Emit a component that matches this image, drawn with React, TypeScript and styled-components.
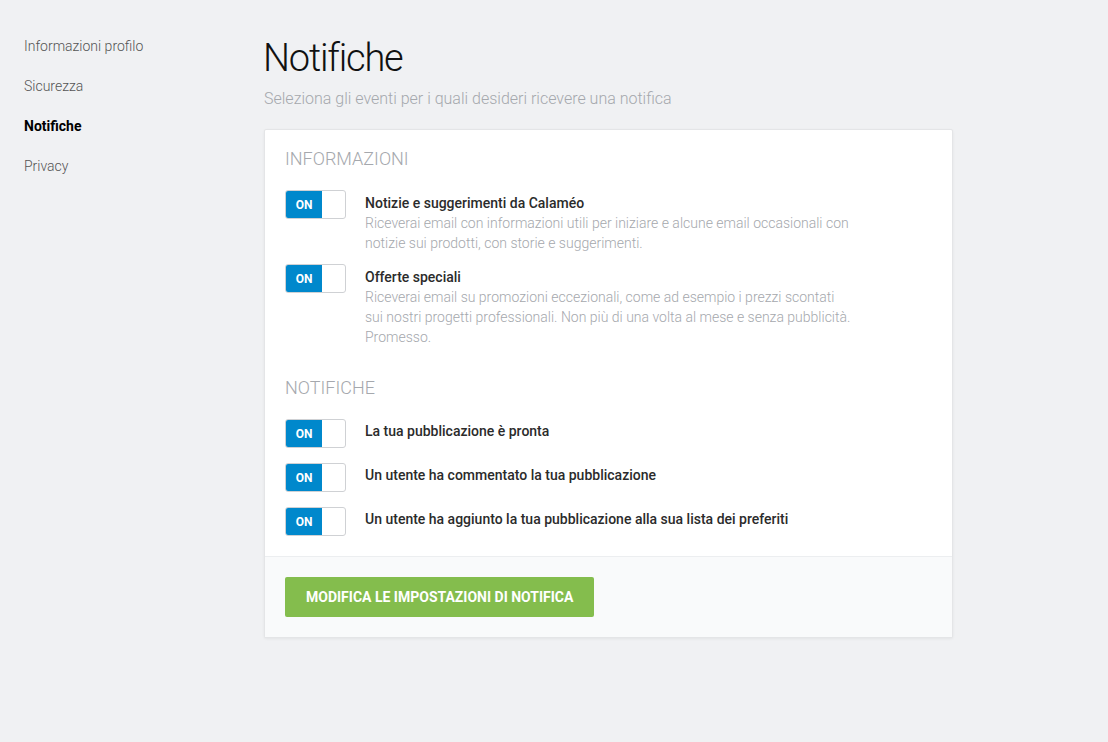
import React from "react";
import styled, { createGlobalStyle } from "styled-components";

const Global = createGlobalStyle`
  html, body { margin: 0; padding: 0; background: #f0f1f3; }
  body { font-family: Roboto, "Liberation Sans", sans-serif; color: #333; }
  * { box-sizing: border-box; }
`;

const Page = styled.div`
  display: flex;
  min-height: 742px;
  padding-top: 36px;
`;

const Sidebar = styled.nav`
  width: 264px;
  padding-left: 24px;
  display: flex;
  flex-direction: column;
`;

const NavItem = styled.a<{ $active?: boolean }>`
  display: block;
  height: 40px;
  line-height: 20px;
  font-size: 14px;
  font-weight: ${(p) => (p.$active ? 700 : 300)};
  color: ${(p) => (p.$active ? "#000" : "#555")};
  text-decoration: none;
`;

const Main = styled.main`
  width: 689px;
  display: flex;
  flex-direction: column;
`;

const Title = styled.h1`
  margin: -2px 0 0 -1px;
  font-size: 38px;
  line-height: 48px;
  font-weight: 300;
  letter-spacing: -1.2px;
  color: #111;
`;

const Subtitle = styled.p`
  margin: 7px 0 0;
  font-size: 16px;
  line-height: 20px;
  font-weight: 300;
  color: #a5a8ad;
`;

const Card = styled.section`
  margin-top: 20px;
  background: #fff;
  border: 1px solid #e4e5e7;
  border-radius: 2px;
  box-shadow: 0 1px 3px rgba(0, 0, 0, 0.06);
`;

const Body = styled.div`
  padding: 19px 20px 20px;
  display: flex;
  flex-direction: column;
`;

const SectionHeading = styled.h2<{ $first?: boolean }>`
  margin: ${(p) => (p.$first ? "0" : "31px")} 0 0;
  font-size: 18px;
  line-height: 20px;
  font-weight: 300;
  color: #a5a8ad;
  text-transform: uppercase;
`;

const List = styled.div<{ $gap: number }>`
  margin-top: 21px;
  display: flex;
  flex-direction: column;
  gap: ${(p) => p.$gap}px;
`;

const Row = styled.div`
  display: flex;
  align-items: flex-start;
  gap: 19px;
`;

const Toggle = styled.div`
  flex: none;
  width: 61px;
  height: 29px;
  border: 1px solid #cfd1d4;
  border-radius: 3px;
  background: #fff;
  display: flex;
  overflow: hidden;
`;

const ToggleOn = styled.span`
  width: 36px;
  height: 100%;
  background: #0088cc;
  color: #fff;
  font-size: 12px;
  font-weight: 700;
  display: flex;
  align-items: center;
  justify-content: center;
`;

const Text = styled.div<{ $pad: number }>`
  padding-top: ${(p) => p.$pad}px;
  max-width: 486px;
`;

const ItemTitle = styled.div`
  font-size: 14px;
  line-height: 20px;
  font-weight: 500;
  color: #2b2b2b;
`;

const ItemDesc = styled.div`
  font-size: 14px;
  line-height: 20px;
  font-weight: 300;
  color: #a5a8ad;
`;

const Footer = styled.div`
  border-top: 1px solid #eceef0;
  background: #f9fafb;
  padding: 20px;
`;

const Button = styled.button`
  height: 40px;
  padding: 0 21px;
  border: none;
  border-radius: 2px;
  background: #84bd4d;
  color: #fff;
  font-family: Roboto, "Liberation Sans", sans-serif;
  font-size: 14px;
  font-weight: 700;
  text-transform: uppercase;
  cursor: pointer;
`;

const Switch = () => (
  <Toggle>
    <ToggleOn>ON</ToggleOn>
  </Toggle>
);

export default function App() {
  return (
    <>
      <Global />
      <Page>
        <Sidebar>
          <NavItem href="#">Informazioni profilo</NavItem>
          <NavItem href="#">Sicurezza</NavItem>
          <NavItem href="#" $active>
            Notifiche
          </NavItem>
          <NavItem href="#">Privacy</NavItem>
        </Sidebar>
        <Main>
          <Title>Notifiche</Title>
          <Subtitle>Seleziona gli eventi per i quali desideri ricevere una notifica</Subtitle>
          <Card>
            <Body>
              <SectionHeading $first>Informazioni</SectionHeading>
              <List $gap={11}>
                <Row>
                  <Switch />
                  <Text $pad={3}>
                    <ItemTitle>Notizie e suggerimenti da Calaméo</ItemTitle>
                    <ItemDesc>
                      Riceverai email con informazioni utili per iniziare e alcune email occasionali con notizie
                      sui prodotti, con storie e suggerimenti.
                    </ItemDesc>
                  </Text>
                </Row>
                <Row>
                  <Switch />
                  <Text $pad={3}>
                    <ItemTitle>Offerte speciali</ItemTitle>
                    <ItemDesc>
                      Riceverai email su promozioni eccezionali, come ad esempio i prezzi scontati sui nostri
                      progetti professionali. Non più di una volta al mese e senza pubblicità. Promesso.
                    </ItemDesc>
                  </Text>
                </Row>
              </List>
              <SectionHeading>Notifiche</SectionHeading>
              <List $gap={15}>
                <Row>
                  <Switch />
                  <Text $pad={2}>
                    <ItemTitle>La tua pubblicazione è pronta</ItemTitle>
                  </Text>
                </Row>
                <Row>
                  <Switch />
                  <Text $pad={2}>
                    <ItemTitle>Un utente ha commentato la tua pubblicazione</ItemTitle>
                  </Text>
                </Row>
                <Row>
                  <Switch />
                  <Text $pad={2}>
                    <ItemTitle>Un utente ha aggiunto la tua pubblicazione alla sua lista dei preferiti</ItemTitle>
                  </Text>
                </Row>
              </List>
            </Body>
            <Footer>
              <Button>Modifica le impostazioni di notifica</Button>
            </Footer>
          </Card>
        </Main>
      </Page>
    </>
  );
}
